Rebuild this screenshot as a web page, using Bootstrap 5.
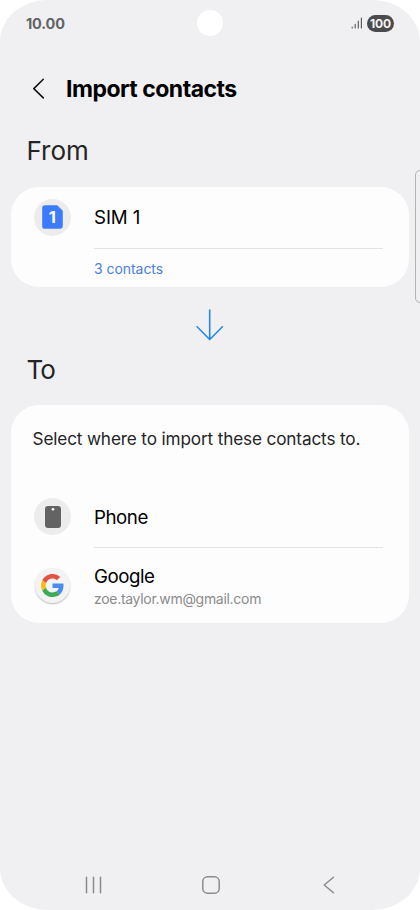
<!DOCTYPE html>
<html lang="en">
<head>
<meta charset="utf-8">
<meta name="viewport" content="width=device-width, initial-scale=1">
<title>Import contacts</title>
<link href="https://cdn.jsdelivr.net/npm/bootstrap@5.3.0/dist/css/bootstrap.min.css" rel="stylesheet">
<style>
body{background:#fff;font-family:Inter,"Liberation Sans",sans-serif;color:#000;overflow:hidden}
.phone{width:420px;height:910px;background:#f0f0f2;border-radius:47px/42px;overflow:hidden}
.statusbar{height:46px;padding:0 26px 0 26px}
.clock{font-size:14.5px;font-weight:700;color:#636365;letter-spacing:-.15px;padding-top:1px}
.camera{width:26px;height:26px;background:#fff;left:197px;top:10px}
.battery{width:27px;height:17px;background:#4b4b4d;color:#f4f4f5;font-size:12px;font-weight:700;line-height:17px;letter-spacing:-.1px}
.titlebar{height:86px;padding-left:32px}
.title{font-size:23px;font-weight:700;line-height:30px;letter-spacing:-.5px;margin-left:21px}
.section{font-size:26px;line-height:36px;color:#252527;padding:1px 0 0 26.5px;font-weight:400}
.section-to{letter-spacing:-1px}
.panel{margin:0 11px;background:#fdfdfe;border-radius:28px}
.panel-from{height:100.5px;margin-top:17.5px}
.panel-to{height:218.5px;margin-top:16.5px}
.avatar{width:37px;height:37px;background:#ececed}
.avatar-google{width:35px;height:35px;margin:0 1px;background:#f3f3f4;box-shadow:0 1px 1.5px #bbb}
.entry{height:61px;padding-left:23px}
.entry-phone{margin-top:35px}
.entry-google{height:75px}
.label{font-size:18.7px;line-height:24px;margin-left:23px;padding-top:1px;letter-spacing:-.1px}
.label-tight{letter-spacing:-.45px;padding-top:3px}
.rule{height:1.4px;background:#e3e3e5;margin:0 26.5px 0 83px}
.count{font-size:14px;line-height:20px;color:#4a7fe0;margin:10px 0 0 83px;letter-spacing:-.05px}
.hint{font-size:17.2px;line-height:24px;color:#252527;padding:22.5px 0 0 21.5px;white-space:nowrap;letter-spacing:-.15px}
.mail{font-size:14px;line-height:20px;color:#8b8b8d;margin-left:23px;letter-spacing:-.3px}
.transfer{height:42px;padding-top:22px;margin-bottom:22px}
.edge{left:415px;top:170px;width:12px;height:133px;border:1.3px solid #b2b2b4;border-radius:5px}
.keys{height:50px;padding:16px 85px 0}
.keys-home{margin-right:4px}
</style>
</head>
<body>
<main class="phone position-relative d-flex flex-column">
  <div class="statusbar d-flex align-items-center justify-content-between">
    <span class="clock">10.00</span>
    <span class="d-flex align-items-center">
      <svg width="12" height="12" viewBox="0 0 12 12" class="me-1" stroke="#606062" stroke-width="1.2" stroke-linecap="round"><path d="M1.2 10.2v.7M4.2 7.4v3.5M7.3 4.2v6.7M10.4 1v9.9"/></svg>
      <span class="battery rounded-pill text-center">100</span>
    </span>
  </div>
  <div class="camera position-absolute rounded-circle"></div>

  <header class="titlebar d-flex align-items-center">
    <svg width="13" height="22" viewBox="0 0 13 22" fill="none" stroke="#101012" stroke-width="1.5" stroke-linecap="round" stroke-linejoin="round"><path d="M11.3 1.2 1.8 10.6l9.5 9.3"/></svg>
    <h1 class="title mb-0">Import contacts</h1>
  </header>

  <h2 class="section mb-0">From</h2>
  <section class="panel panel-from">
    <div class="entry d-flex align-items-center">
      <span class="avatar rounded-circle d-flex align-items-center justify-content-center">
        <svg width="21" height="24" viewBox="0 0 21 24"><path d="M3 .2h12.200l5.600 5.500V20.800a3 3 0 0 1-3 3H3a2.800 2.800 0 0 1-2.800-3V3.200A2.800 2.800 0 0 1 3 .2z" fill="#3c7bfb"/><text x="10.200" y="18" text-anchor="middle" font-family="Inter" font-size="16.500" font-weight="700" fill="#fff">1</text></svg>
      </span>
      <span class="label">SIM 1</span>
    </div>
    <div class="rule"></div>
    <div class="count">3 contacts</div>
  </section>

  <div class="transfer d-flex justify-content-center">
    <svg width="28" height="32" viewBox="0 0 28 32" fill="none" stroke="#2489e6" stroke-width="1.6" stroke-linecap="round" stroke-linejoin="round"><path d="M13.700 1v29.500M1.100 17.800l12.600 12.700 12.700-12.700"/></svg>
  </div>

  <h2 class="section section-to mb-0">To</h2>
  <section class="panel panel-to">
    <p class="hint mb-0">Select where to import these contacts to.</p>
    <div class="entry entry-phone d-flex align-items-center">
      <span class="avatar rounded-circle d-flex align-items-center justify-content-center">
        <svg width="16" height="22" viewBox="0 0 16 22"><rect width="16" height="22" rx="3" fill="#636363"/><circle cx="8" cy="3.200" r="1.300" fill="#fff"/></svg>
      </span>
      <span class="label label-tight">Phone</span>
    </div>
    <div class="rule"></div>
    <div class="entry entry-google d-flex align-items-center">
      <span class="avatar avatar-google rounded-circle d-flex align-items-center justify-content-center">
        <svg width="23" height="23" viewBox="0 0 48 48"><path fill="#e25345" d="M24 9.500c3.540 0 6.710 1.220 9.210 3.600l6.850-6.850C35.900 2.380 30.470 0 24 0 14.620 0 6.510 5.380 2.560 13.220l7.980 6.190C12.430 13.720 17.740 9.500 24 9.500z"/><path fill="#4c8bee" d="M46.980 24.550c0-1.570-.15-3.090-.38-4.550H24v9.020h12.940c-.58 2.960-2.260 5.480-4.780 7.180l7.730 6c4.510-4.180 7.090-10.360 7.090-17.650z"/><path fill="#f6bd1b" d="M10.530 28.590c-.48-1.450-.76-2.990-.76-4.590s.27-3.140.76-4.590l-7.980-6.190C.92 16.460 0 20.120 0 24c0 3.880.92 7.540 2.560 10.780z"/><path fill="#3eaa59" d="M24 48c6.480 0 11.930-2.130 15.890-5.810l-7.730-6c-2.150 1.450-4.920 2.300-8.160 2.300-6.260 0-11.570-4.220-13.470-9.910l-7.980 6.190C6.510 42.620 14.620 48 24 48z"/></svg>
      </span>
      <div>
        <div class="label label-tight">Google</div>
        <div class="mail">zoe.taylor.wm@gmail.com</div>
      </div>
    </div>
  </section>

  <nav class="keys mt-auto d-flex align-items-start justify-content-between">
    <svg width="18" height="18" viewBox="0 0 18 18" stroke="#8b8b8d" stroke-width="1.5" stroke-linecap="round"><path d="M1.500 1.200v15.600M8.500 1.200v15.600M15.500 1.200v15.600"/></svg>
    <svg class="keys-home" width="18" height="18" viewBox="0 0 18 18" fill="none" stroke="#8b8b8d" stroke-width="1.5"><rect x=".8" y=".8" width="16.400" height="16.400" rx="4.800"/></svg>
    <svg width="12" height="18" viewBox="0 0 12 18" fill="none" stroke="#8b8b8d" stroke-width="1.500" stroke-linecap="round" stroke-linejoin="round"><path d="M10.500 1.200 1.200 9l9.300 7.800"/></svg>
  </nav>
  <div class="edge position-absolute"></div>
</main>
<script src="https://cdn.jsdelivr.net/npm/bootstrap@5.3.0/dist/js/bootstrap.bundle.min.js"></script>
</body>
</html>
